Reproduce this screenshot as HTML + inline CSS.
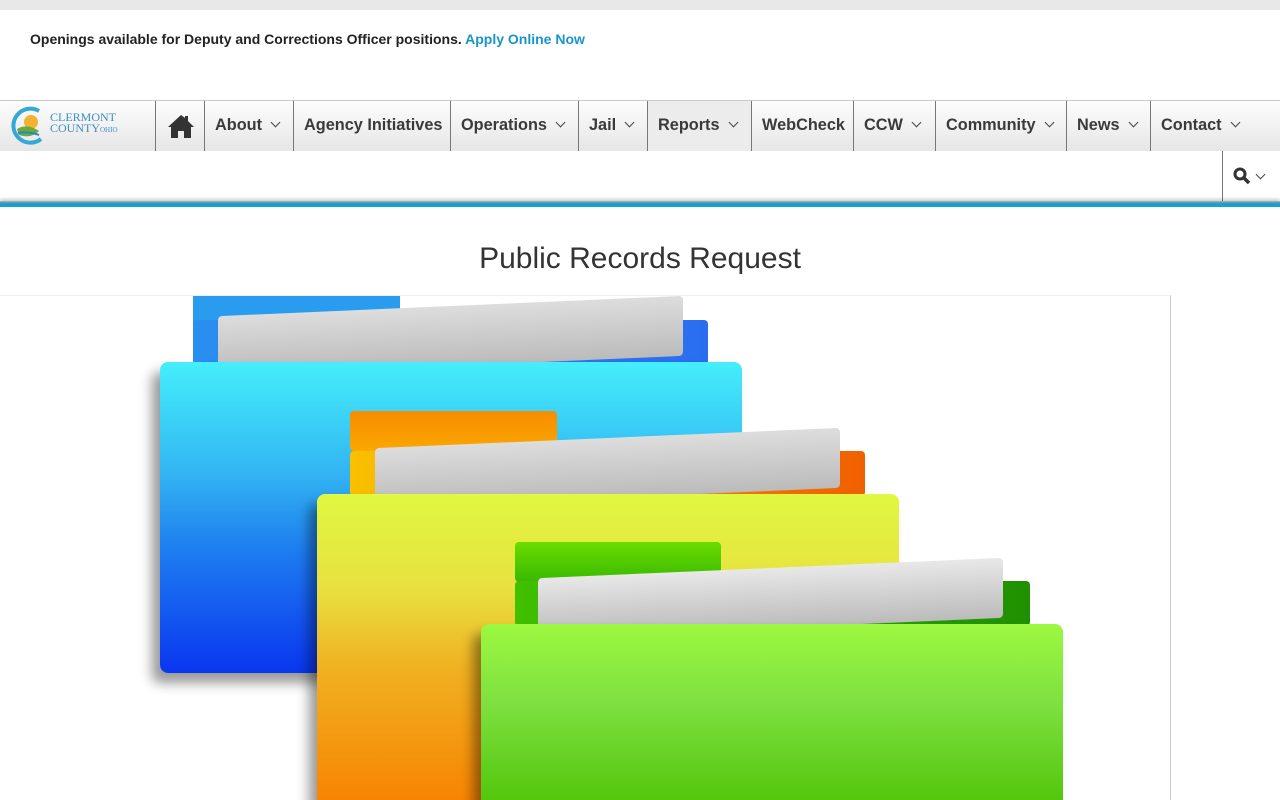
<!DOCTYPE html>
<html><head><style>
*{margin:0;padding:0;box-sizing:border-box}
body{width:1280px;height:800px;overflow:hidden;background:#fff;font-family:"Liberation Sans",Arial,sans-serif;position:relative}
.top{height:10px;background:#e8e8e8}
.alert{position:absolute;left:30px;top:31px;font-size:14px;font-weight:bold;color:#222}
.alert a{color:#1a95c8;text-decoration:none}
.nav{position:absolute;top:100px;left:0;width:1280px;height:51px;background:linear-gradient(#fdfdfd,#e6e6e6);border-top:1px solid #c8c8c8}
.it{position:absolute;top:0;height:51px;border-left:1px solid #777;font-size:16.3px;font-weight:bold;color:#3a3a3a;line-height:48px;padding-left:10px;white-space:nowrap}
.ch{display:inline-block;width:7px;height:7px;border-right:1.5px solid #444;border-bottom:1.5px solid #444;transform:rotate(45deg);margin-left:10px;position:relative;top:-4px}
.row2{position:absolute;top:151px;left:0;width:1280px;height:50px;background:#fff}
.line{position:absolute;top:201px;left:0;width:1280px;height:6px;background:linear-gradient(#9aa 0,#9aa 1px,#1a9fd0 2px,#1a9fd0 6px);box-shadow:0 -2px 3px rgba(0,0,0,.2)}
h1{position:absolute;top:242px;left:0;width:1280px;text-align:center;font-weight:normal;font-size:30px;color:#333}
.img{position:absolute;top:295px;left:0;width:1171px;height:505px;border-right:1px solid #ccc;border-top:1px solid #f0f0f0;overflow:hidden}
.d{position:absolute}
</style></head><body>
<div class="top"></div>
<div class="alert">Openings available for Deputy and Corrections Officer positions. <a>Apply Online Now</a></div>
<div class="nav">
<svg style="position:absolute;left:9px;top:4px" width="40" height="42" viewBox="0 0 40 42"><path d="M30 6 A17 17 0 1 0 32 34" fill="none" stroke="#35a8d8" stroke-width="4"/><circle cx="22" cy="17" r="7" fill="#f2b233"/><path d="M8 24 Q18 18 30 26 Q22 34 10 30Z" fill="#6aab3c"/><path d="M9 28 Q20 26 30 30" stroke="#2b86c6" stroke-width="2" fill="none"/></svg>
<div style="position:absolute;left:50px;top:11px;font-family:'Liberation Serif',serif;font-size:12px;line-height:11px;color:#3a8fc4">CLERMONT<br>COUNTY<span style="font-size:7px">OHIO</span></div>
<div class="it" style="left:155px;width:50px;padding-left:11px"><svg width="28" height="24" viewBox="0 0 28 24" style="margin-top:13px"><path d="M14 1 L1 13 L4 13 L4 24 L11 24 L11 17 L17 17 L17 24 L24 24 L24 13 L27 13 L21 7 L21 2 L18 2 L18 4Z" fill="#333"/></svg></div>
<div class="it" style="left:204px;width:89px">About<span class="ch"></span></div>
<div class="it" style="left:293px;width:157px">Agency Initiatives</div>
<div class="it" style="left:450px;width:128px">Operations<span class="ch"></span></div>
<div class="it" style="left:578px;width:69px">Jail<span class="ch"></span></div>
<div class="it" style="left:647px;width:104px;background:#ececec">Reports<span class="ch"></span></div>
<div class="it" style="left:751px;width:102px">WebCheck</div>
<div class="it" style="left:853px;width:82px">CCW<span class="ch"></span></div>
<div class="it" style="left:935px;width:131px">Community<span class="ch"></span></div>
<div class="it" style="left:1066px;width:84px">News<span class="ch"></span></div>
<div class="it" style="left:1150px;width:130px">Contact<span class="ch"></span></div>
</div>
<div class="row2"><div style="position:absolute;left:1222px;top:0;height:50px;border-left:1px solid #777;width:58px;padding:16px 0 0 10px"><svg width="18" height="18" viewBox="0 0 18 18"><circle cx="7" cy="7" r="5" fill="none" stroke="#333" stroke-width="3"/><path d="M11 11 L16 16" stroke="#333" stroke-width="3.5"/></svg><span class="ch" style="margin-left:6px;top:-7px"></span></div></div>
<div class="line"></div>
<h1>Public Records Request</h1>
<div class="img">
<div class="d" style="left:193px;top:0;width:207px;height:30px;background:#2a9cf0"></div>
<div class="d" style="left:193px;top:24px;width:515px;height:45px;background:linear-gradient(90deg,#2a8ef0,#2a6ef0);border-radius:4px"></div>
<div class="d" style="left:218px;top:10px;width:465px;height:60px;background:linear-gradient(#ddd,#bbb);transform:skewY(-2.5deg);border-radius:4px"></div>
<div class="d" style="left:160px;top:66px;width:582px;height:311px;background:linear-gradient(#45eefc,#33b6f2 35%,#1e7ef0 60%,#0a36f0);border-radius:8px;box-shadow:-8px 10px 12px rgba(0,0,0,.4)"></div>
<div class="d" style="left:350px;top:115px;width:207px;height:40px;background:linear-gradient(#f98b00,#f9a800);border-radius:4px"></div>
<div class="d" style="left:350px;top:155px;width:515px;height:45px;background:linear-gradient(90deg,#f9c000,#f06000);border-radius:4px"></div>
<div class="d" style="left:375px;top:142px;width:465px;height:60px;background:linear-gradient(#ddd,#bbb);transform:skewY(-2.5deg);border-radius:4px"></div>
<div class="d" style="left:317px;top:198px;width:582px;height:320px;background:linear-gradient(#e0f840,#e8e040 30%,#f0b020 55%,#f88000);border-radius:8px;box-shadow:-8px 10px 12px rgba(0,0,0,.4)"></div>
<div class="d" style="left:515px;top:246px;width:206px;height:40px;background:linear-gradient(#6bdc00,#38b800);border-radius:4px"></div>
<div class="d" style="left:515px;top:285px;width:515px;height:45px;background:linear-gradient(90deg,#40c000,#209000);border-radius:4px"></div>
<div class="d" style="left:538px;top:272px;width:465px;height:60px;background:linear-gradient(#e8e8e8,#bbb);transform:skewY(-2.5deg);border-radius:4px"></div>
<div class="d" style="left:481px;top:328px;width:582px;height:200px;background:linear-gradient(#9cf840,#7ee040 40%,#48c000);border-radius:8px;box-shadow:-8px 10px 12px rgba(0,0,0,.4)"></div>
</div>
</body></html>
